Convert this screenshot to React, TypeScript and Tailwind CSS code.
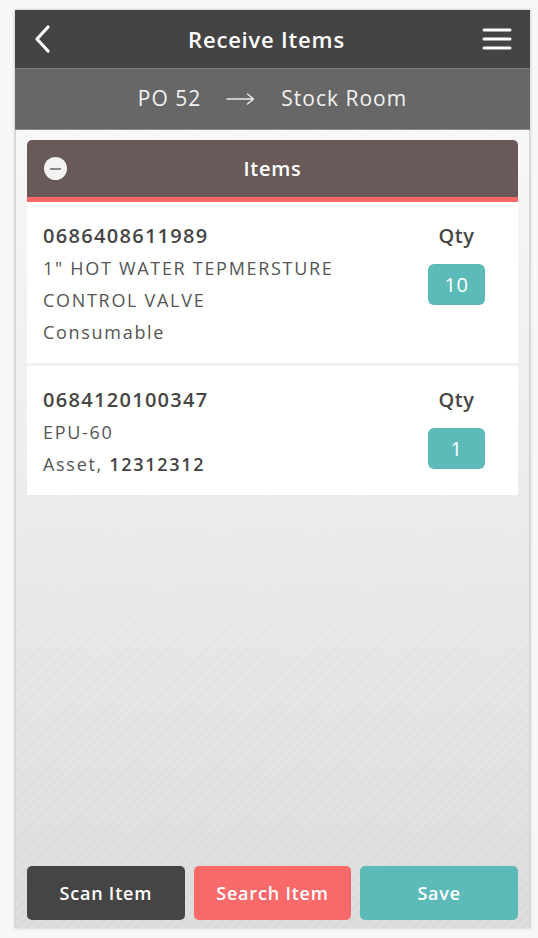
import React from "react";

const font = "font-['Open_Sans',_'Noto_Sans',_sans-serif]";

function Item({
  code,
  lines,
  qty,
}: {
  code: string;
  lines: React.ReactNode[];
  qty: string;
}) {
  return (
    <div className="flex bg-white pl-4 pr-[33px] pt-[18px] pb-[15px]">
      <div className="flex-1">
        <div className="text-[20px] leading-[32px] font-semibold text-[#464646] tracking-[1.3px]">{code}</div>
        {lines.map((l, i) => (
          <div key={i} className="text-[18px] leading-[32px] text-[#555] tracking-[1.7px]">
            {l}
          </div>
        ))}
      </div>
      <div className="flex flex-col items-center w-[57px]">
        <div className="text-[20px] leading-[32px] font-semibold text-[#464646] tracking-[0.5px]">Qty</div>
        <div className="mt-[12px] w-[57px] h-[41px] rounded-[6px] bg-[#5cbab8] text-white text-[20px] flex items-center justify-center tracking-[0.5px]">
          {qty}
        </div>
      </div>
    </div>
  );
}

export default function App() {
  return (
    <div className={`min-h-[938px] bg-[#f7f7f7] pt-[10px] pl-[15px] pr-[8px] ${font}`}>
      <div className="flex flex-col h-[918px] w-[515px] shadow-[0_0_3px_rgba(0,0,0,0.25)]">
        <div className="h-[59px] bg-[#454444] flex items-center justify-between px-4 border-b border-[#7a7a7a]">
          <svg width="18" height="30" viewBox="0 0 18 30" className="ml-[2px]">
            <path d="M15 3 L4 15 L15 27" stroke="#fff" strokeWidth="3.2" fill="none" strokeLinecap="round" strokeLinejoin="round" />
          </svg>
          <div className="text-white text-[22px] font-semibold tracking-[0.8px]">Receive Items</div>
          <svg width="30" height="26" viewBox="0 0 30 26" className="mr-[2px]">
            <path d="M2 4 H28 M2 13 H28 M2 22 H28" stroke="#fff" strokeWidth="3" strokeLinecap="round" />
          </svg>
        </div>
        <div className="h-[61px] bg-[#676767] flex items-center justify-center gap-[25px] text-[#f2f2f2] text-[21px] tracking-[1px] border-b border-[#8a8a8a]">
          <span>PO 52</span>
          <svg width="30" height="14" viewBox="0 0 30 14">
            <path d="M1 7 H27 M21.5 2 L27.5 7 L21.5 12" stroke="#ececec" strokeWidth="1.5" fill="none" strokeLinecap="round" strokeLinejoin="round" />
          </svg>
          <span>Stock Room</span>
        </div>
        <div className="flex-1 flex flex-col px-[11px] pt-[10px] pb-[8px] bg-[repeating-linear-gradient(135deg,rgba(255,255,255,0.1)_0px,rgba(255,255,255,0.1)_3px,transparent_3px,transparent_7px),linear-gradient(180deg,#f7f7f7_0%,#ededed_40%,#dadada_100%)] border-x border-[#d2d2d2]">
          <div className="flex flex-col">
            <div className="relative h-[57px] bg-[#695a59] rounded-t-[5px] flex items-center justify-center">
              <div className="absolute left-[17px] top-[17px] w-[23px] h-[23px] rounded-full bg-[#f3f3f3] flex items-center justify-center">
                <div className="w-[11px] h-[2px] bg-[#888]" />
              </div>
              <div className="text-white text-[20px] font-semibold tracking-[0.7px]">Items</div>
            </div>
            <div className="h-[5px] bg-[#fa6868]" />
            <Item
              code="0686408611989"
              lines={["1\" HOT WATER TEPMERSTURE", "CONTROL VALVE", "Consumable"]}
              qty="10"
            />
            <div className="h-[3px] bg-[#f1f1f1]" />
            <Item
              code="0684120100347"
              lines={["EPU-60", <span key="a">Asset, <span className="font-semibold text-[#444]">12312312</span></span>]}
              qty="1"
            />
          </div>
          <div className="flex-1" />
          <div className="flex gap-[9px]">
            <button className="flex-1 h-[54px] rounded-[5px] bg-[#464545] text-white text-[18px] font-semibold tracking-[0.8px]">Scan Item</button>
            <button className="flex-1 h-[54px] rounded-[5px] bg-[#fb6a6a] text-white text-[18px] font-semibold tracking-[0.8px]">Search Item</button>
            <button className="flex-1 h-[54px] rounded-[5px] bg-[#5cbab8] text-white text-[18px] font-semibold tracking-[0.8px]">Save</button>
          </div>
        </div>
      </div>
    </div>
  );
}
